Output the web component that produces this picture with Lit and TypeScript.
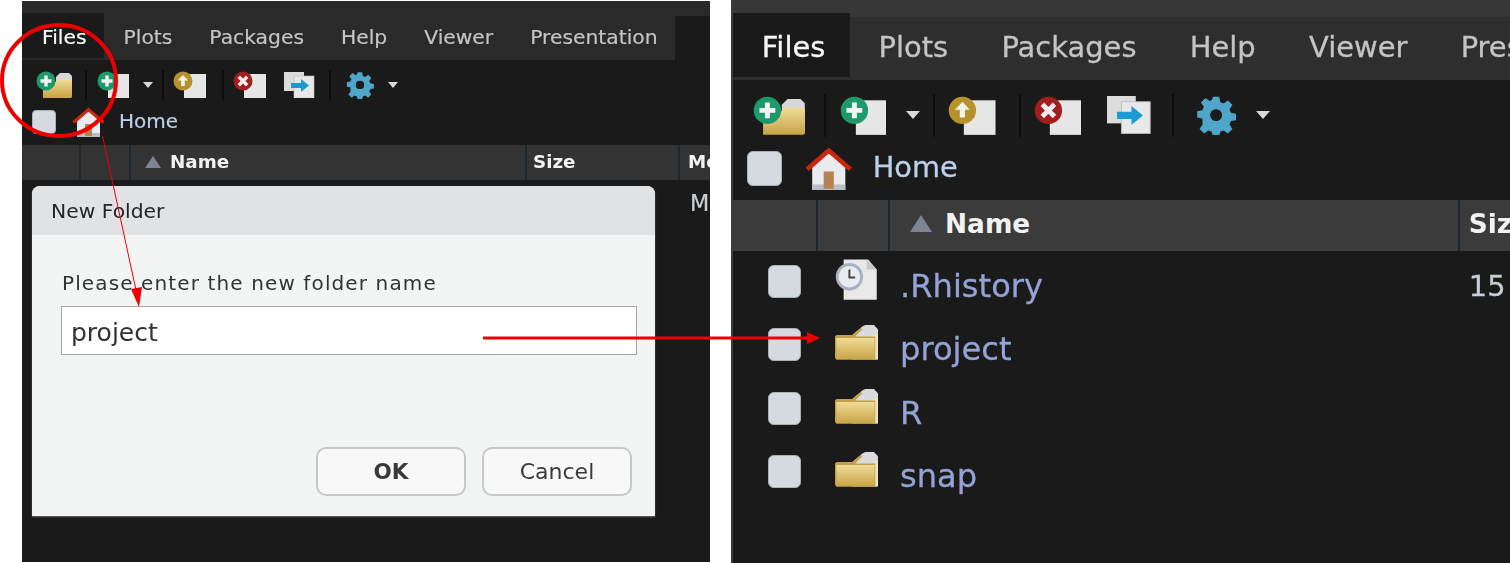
import { LitElement, css, html, svg } from "lit";
import { customElement, property } from "lit/decorators.js";

type Row = { name: string; kind: "history" | "folder"; size?: string; modified?: string };

const TABS = ["Files", "Plots", "Packages", "Help", "Viewer", "Presentation"];

// shared gradient for the gold folders
const defs = (id: string) => svg`<defs><linearGradient id=${id} x1="0" y1="0" x2="0" y2="1">
  <stop offset="0" stop-color="#f0dc98"/><stop offset="1" stop-color="#c9a344"/></linearGradient></defs>`;

const page = svg`<rect x="11" y="3" width="22" height="24" fill="#e6e6e6"/>`;
const plus = svg`<path d="M8.300 4.500h3.400v3.800h3.800v3.400h-3.800v3.800H8.300v-3.800H4.500V8.300h3.800z" fill="#f2f5f3"/>`;

const ICONS = {
  newFolder: html`<svg class="icon" width="37" height="27" viewBox="0 0 37 27">${defs("nf")}
    <path d="M20 6l4-4h9l3 3v21H20z" fill="#d6d8dc"/>
    <path d="M7 11h12l4-3h12l1 1v17l-1 1H7z" fill="url(#nf)"/>
    <circle cx="10" cy="10" r="9.500" fill="#1c9a6c"/>
    ${plus}</svg>`,
  newFile: html`<svg class="icon" width="32" height="27" viewBox="0 0 32 27"><rect x="11" y="3" width="21" height="24" fill="#e6e6e6"/>
    <circle cx="10" cy="10" r="9.500" fill="#1c9a6c"/>
    ${plus}</svg>`,
  upload: html`<svg class="icon" width="33" height="27" viewBox="0 0 33 27">${page}
    <circle cx="10" cy="10" r="9.500" fill="#b5922c"/>
    <path d="M10 4l5.200 5.500h-3.400V15H8.200V9.500H4.800z" fill="#f5f3ea"/></svg>`,
  remove: html`<svg class="icon" width="33" height="27" viewBox="0 0 33 27">${page}
    <circle cx="10" cy="10" r="9.500" fill="#a31d1d"/>
    <path d="M7 4.600l3 3 3-3 2.400 2.400-3 3 3 3-2.400 2.400-3-3-3 3L4.600 13l3-3-3-3z" fill="#f5eeee"/></svg>`,
  rename: html`<svg class="icon" width="31" height="26" viewBox="0 0 31 26">
    <rect x="0" y="0" width="20" height="19" fill="#dcdcdc"/>
    <rect x="10" y="4" width="20" height="22" fill="#e8e8e8" stroke="#bdbdbd" stroke-width="0.600"/>
    <path d="M7 11h10V7l8 6.500-8 6.500v-4H7z" fill="#1b9ad6"/></svg>`,
  gear: html`<svg class="icon" width="28" height="28" viewBox="0 0 28 28">
    <path fill="#4fa6c8" fill-rule="evenodd" d="M11.500 0h5l.7 4 2.700 1.100 3.300-2.300 3.500 3.500-2.300 3.300 1.100 2.700 4 .7v5l-4 .7-1.100 2.700 2.300 3.300-3.500 3.500-3.300-2.300-2.700 1.100-.7 4h-5l-.7-4-2.700-1.100-3.300 2.300-3.500-3.500 2.300-3.300L3.500 16.700l-4-.7v-5l4-.7 1.100-2.700L2.300 4.300l3.500-3.500 3.300 2.300 1.700-.7zM14 9.500a4.500 4.500 0 1 0 0 9 4.500 4.500 0 0 0 0-9z" transform="translate(1.300 1.300) scale(0.9)"/>
    <circle cx="14" cy="14" r="4" fill="#1c1c1c"/></svg>`,
  home: html`<svg class="icon" width="33" height="30" viewBox="0 0 33 30">
    <path d="M5 14L16.500 3 28 14v16H5z" fill="#e9ebee"/>
    <path d="M5 26h23v4H5z" fill="#b9bec4"/>
    <rect x="13" y="17" width="7" height="12" fill="#b5834f"/>
    <path d="M1.500 15.500L16.500 2.500l15 13" fill="none" stroke="#c9260f" stroke-width="3.200"/></svg>`,
  history: html`<svg class="icon" width="30" height="30" viewBox="0 0 30 30">
    <path d="M6 1h17l6 7v21H6z" fill="#e8e8e8"/><path d="M22 1l7 7h-7z" fill="#c9c9c9"/>
    <circle cx="10" cy="13" r="8.500" fill="#e8ebf0" stroke="#a9b0bd" stroke-width="2"/>
    <path d="M10 8v5.500h4" fill="none" stroke="#444" stroke-width="1.400"/></svg>`,
  folder: html`<svg class="icon" width="30" height="25" viewBox="0 0 30 25">${defs("fo")}
    <path d="M12 7l7-6 2-1h6l3 3v21H12z" fill="#d9dadd"/>
    <path d="M27.500 6H30v17l-1 1h-1.500z" fill="#ece6c8"/>
    <path d="M0 8l1-1h11l6-5 1 1-5 5h14v16H1l-1-1z" fill="#c49f45"/>
    <path d="M1 9h26.500v15H1z" fill="url(#fo)"/></svg>`,
};

@customElement("new-folder-dialog")
class NewFolderDialog extends LitElement {
  static styles = css`
    :host {
      position: absolute;
      left: 10px;
      top: 185px;
      width: 623px;
      height: 330px;
      display: flex;
      flex-direction: column;
      background: #f3f4f4;
      border-radius: 8px 8px 0 0;
      box-shadow: 0 1px 2px rgba(255, 255, 255, 0.35);
      font-family: "DejaVu Sans", sans-serif;
      color: #333;
      filter: blur(0.3px);
    }

    .title {
      height: 49px;
      padding-left: 19px;
      display: flex;
      align-items: center;
      background: #e1e2e4;
      border-radius: 8px 8px 0 0;
      font-size: 20.300px;
      color: #22262b;
    }

    .body {
      flex: 1;
      display: flex;
      flex-direction: column;
      padding: 0 18px 20px 30px;
    }

    label {
      margin-top: 34px;
      line-height: 28px;
      font-size: 20px;
      letter-spacing: 1.120px;
    }

    input {
      all: unset;
      box-sizing: border-box;
      margin: 9px 0 0 -1px;
      width: 576px;
      height: 49px;
      padding: 3px 9px 0;
      background: #fff;
      border: 1.500px solid #a5a7a8;
      font-size: 25px;
      color: #333;
    }

    .buttons {
      margin-top: auto;
      display: flex;
      justify-content: flex-end;
      gap: 16px;
      padding-right: 5px;
    }

    button {
      all: unset;
      box-sizing: border-box;
      width: 150px;
      height: 49px;
      display: flex;
      align-items: center;
      justify-content: center;
      background: #f8f8f8;
      border: 2px solid #c6c9ca;
      border-radius: 10px;
      font-size: 22px;
      color: #3a3a3a;
    }

    .ok {
      font-weight: 700;
      font-size: 21.500px;
    }
  `;

  render() {
    return html`
      <div class="title">New Folder</div>
      <div class="body">
        <label>Please enter the new folder name</label>
        <input .value=${"project"} />
        <div class="buttons">
          <button class="ok">OK</button>
          <button>Cancel</button>
        </div>
      </div>
    `;
  }
}

@customElement("files-pane")
class FilesPane extends LitElement {
  @property({ type: Array }) rows: Row[] = [];

  static styles = css`
    :host {
      display: flex;
      flex-direction: column;
      position: relative;
      height: 100%;
      overflow: hidden;
      background: #1a1a1a;
      font-family: "DejaVu Sans", sans-serif;
    }

    .strip {
      flex: none;
      height: var(--strip-height, 15px);
      background: var(--strip-bg, #2a2a2a);
    }

    .tabs {
      flex: none;
      width: 653px;
      height: 44px;
      display: flex;
      align-items: center;
      padding: 0 0 2px 20px;
      box-sizing: border-box;
      position: relative;
      isolation: isolate;
      background: var(--tabs-bg, #2a2a2a);
      font-size: var(--tabs-font, 20.300px);
      color: #c4c4c4;
      white-space: nowrap;
      -webkit-text-stroke: 0.2px currentColor;
      filter: blur(0.3px);
    }

    .tab {
      position: relative;
      margin-right: 37px;
    }

    .tab.active {
      color: #f8f8f8;
    }

    .tab.active::before {
      content: "";
      position: absolute;
      z-index: -1;
      left: -20px;
      right: -17px;
      top: -12px;
      bottom: -9px;
      background: #1a1a1a;
    }

    .toolbar {
      flex: none;
      box-sizing: border-box;
      height: 42.500px;
      display: flex;
      align-items: center;
      padding: 6.500px 0 0 14px;
      filter: blur(0.3px);
    }

    .group {
      display: flex;
      align-items: center;
      height: 30px;
      border-left: 2px solid #0d0d0d;
    }

    .folder-group {
      padding-right: 12px;
      border-left: 0;
    }

    .file-group {
      gap: 14px;
      padding: 0 9px 0 10px;
    }

    .upload-group {
      padding: 0 16px 0 9px;
    }

    .edit-group {
      gap: 18px;
      padding: 0 14px 0 9px;
    }

    .gear-group {
      gap: 14px;
      padding-left: 15px;
    }

    .caret {
      width: 0;
      height: 0;
      border: 5.500px solid transparent;
      border-top: 6px solid #d9d9d9;
      border-bottom: 0;
    }

    .icon {
      display: block;
      flex: none;
    }

    .crumbs {
      flex: none;
      box-sizing: border-box;
      height: var(--crumbs-height, 41px);
      display: flex;
      align-items: center;
      padding: 0 0 3px 10px;
      font-size: 20px;
      color: #bcd0ec;
      -webkit-text-stroke: 0.2px currentColor;
      filter: blur(0.3px);
    }

    .check {
      flex: none;
      box-sizing: border-box;
      width: 24px;
      height: 24px;
      background: #d5dae0;
      border: 1px solid #aab0b8;
      border-radius: 4px;
    }

    .crumbs .icon {
      margin: 0 14px 0 16px;
    }

    .crumbs .label {
      margin-top: -2px;
    }

    .cols {
      display: grid;
      grid-template-columns: 59px 50px 396px 153px 1fr;
    }

    .header {
      flex: none;
      height: 35px;
      align-items: stretch;
      background: var(--header-bg, #333);
      font-size: 18.300px;
      font-weight: 700;
      color: #f2f2f2;
      filter: blur(0.3px);
    }

    .header > div {
      box-sizing: border-box;
      display: flex;
      align-items: center;
      padding-bottom: 2px;
      border-right: 2px solid #1d2730;
      overflow: hidden;
      white-space: nowrap;
    }

    .name-head {
      gap: 9px;
      padding-left: 14px;
    }

    .size-head {
      padding-left: 6px;
    }

    .mod-head {
      padding-left: 8px;
      border-right: 0 !important;
    }

    .triangle {
      border: 8px solid transparent;
      border-bottom: 12px solid #7d8494;
      border-top: 0;
    }

    .row {
      height: 44px;
      align-items: center;
      font-size: 22.300px;
      color: #93a3d6;
      -webkit-text-stroke: 0.2px currentColor;
      filter: blur(0.3px);
    }

    .row .check {
      width: 23px;
      height: 23px;
      margin: -1px 0 0 24px;
    }

    .row .icon {
      margin: -3px 0 0 12px;
    }

    .row .name {
      padding: 5px 0 0 7px;
      white-space: nowrap;
    }

    .row .size,
    .row .mod {
      padding-top: 5px;
      color: #c9ced6;
      white-space: nowrap;
      overflow: hidden;
    }

    .row .size {
      padding-left: 6px;
      font-size: 20px;
    }

    .row .mod {
      margin-top: -3px;
      padding-left: 10px;
    }
  `;

  render() {
    return html`
      <div class="strip"></div>
      <div class="tabs">
        ${TABS.map((t, i) => html`<div class="tab ${i === 0 ? "active" : ""}">${t}</div>`)}
      </div>
      <div class="toolbar">
        <div class="group folder-group">${ICONS.newFolder}</div>
        <div class="group file-group">${ICONS.newFile}<span class="caret"></span></div>
        <div class="group upload-group">${ICONS.upload}</div>
        <div class="group edit-group">${ICONS.remove}${ICONS.rename}</div>
        <div class="group gear-group">${ICONS.gear}<span class="caret"></span></div>
      </div>
      <div class="crumbs">
        <span class="check"></span>
        ${ICONS.home}
        <span class="label">Home</span>
      </div>
      <div class="cols header">
        <div></div>
        <div></div>
        <div class="name-head"><span class="triangle"></span>Name</div>
        <div class="size-head">Size</div>
        <div class="mod-head">Modified</div>
      </div>
      ${this.rows.map(
        (r) => html`
          <div class="cols row">
            <span class="check"></span>
            ${ICONS[r.kind]}
            <span class="name">${r.name}</span>
            <span class="size">${r.size ?? ""}</span>
            <span class="mod">${r.modified ?? ""}</span>
          </div>
        `
      )}
      <slot></slot>
    `;
  }
}

@customElement("app-root")
export class AppRoot extends LitElement {
  static styles = css`
    :host {
      display: flex;
      position: relative;
      width: 1510px;
      height: 563px;
      overflow: hidden;
      background: #fff;
    }

    .left {
      flex: none;
      width: 688px;
      height: 561px;
      margin: 1px 0 0 22px;
      --crumbs-height: 42.500px;
    }

    .right {
      flex: none;
      box-sizing: border-box;
      width: 779px;
      height: 563px;
      margin-left: 21px;
      border-left: 2px solid #3c3c3c;
      --strip-height: 11.500px;
      --strip-bg: #373737;
      --tabs-bg: #2e2e2e;
      --tabs-font: 20.100px;
      --header-bg: #3b3b3b;
    }

    .right files-pane {
      zoom: 1.44;
    }

    .marks {
      position: absolute;
      inset: 0;
      pointer-events: none;
    }
  `;

  render() {
    return html`
      <div class="left">
        <files-pane .rows=${[{ name: "", kind: "history", modified: "May" }]}>
          <new-folder-dialog></new-folder-dialog>
        </files-pane>
      </div>
      <div class="right">
        <files-pane
          .rows=${[
            { name: ".Rhistory", kind: "history", size: "15" },
            { name: "project", kind: "folder" },
            { name: "R", kind: "folder" },
            { name: "snap", kind: "folder" },
          ]}
        ></files-pane>
      </div>
      <svg class="marks" width="1510" height="563" viewBox="0 0 1510 563">
        <ellipse cx="59" cy="80.500" rx="57" ry="55.500" fill="none" stroke="#ee0000" stroke-width="4" />
        <path d="M102.500 136L136 290" stroke="#ee0000" stroke-width="1" />
        <path d="M139 307L131 289 142 287z" fill="#ee0000" />
        <path d="M483 338H808" stroke="#ee0000" stroke-width="3" />
        <path d="M820 338L807 332V344z" fill="#ee0000" />
      </svg>
    `;
  }
}
